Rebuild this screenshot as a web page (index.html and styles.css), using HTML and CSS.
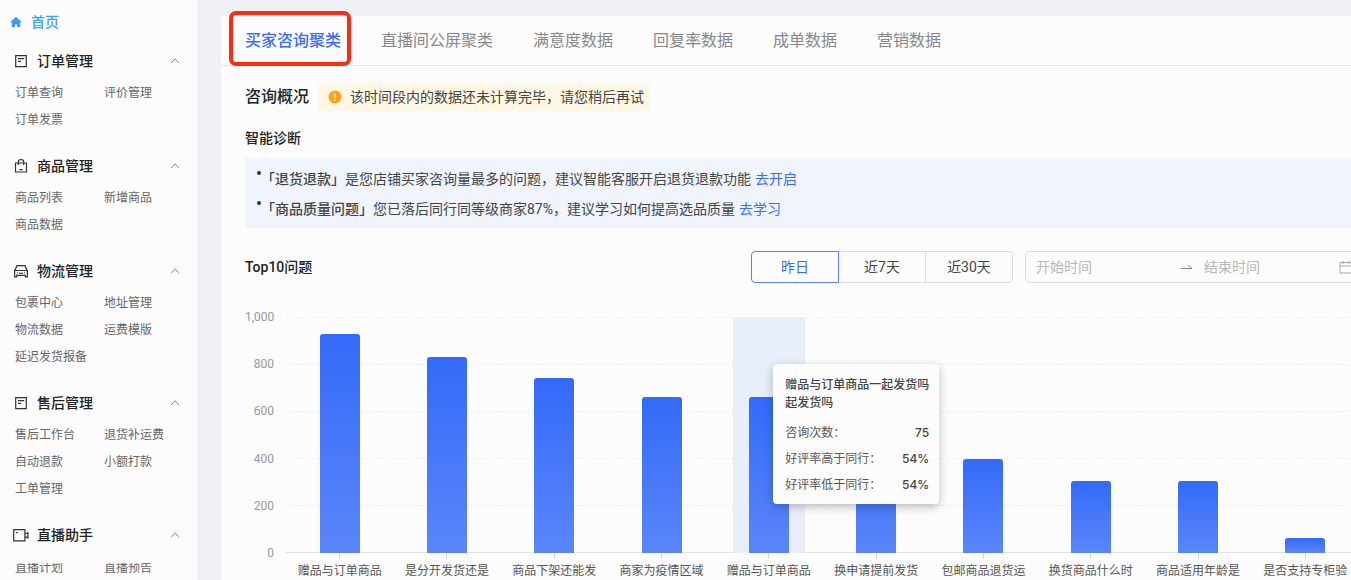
FILE: index.html
```html
<!DOCTYPE html>
<html lang="zh-CN">
<head>
<meta charset="utf-8">
<meta name="viewport" content="width=device-width, initial-scale=1">
<title>买家咨询聚类</title>
<link rel="stylesheet" href="styles.css">
</head>
<body>
<svg class="sprite" aria-hidden="true">
  <symbol id="i-note" viewBox="0 0 16 16"><path d="M2.7 2.6h10.6v11H2.7zM5 5.7h6.2M5 8.3h3.2"/></symbol>
  <symbol id="i-bag" viewBox="0 0 16 16"><path d="M2.5 5h11v9h-11zM5.3 7V4.2a2.7 2.7 0 0 1 5.4 0V7M6.3 11.6h3.4"/></symbol>
  <symbol id="i-car" viewBox="0 0 16 16"><path d="M1.6 8 4 2.7h8L14.4 8M1.6 7.5v6.3h2v-1.4h8.8v1.4h2V7.500zM4 9.800h.8M11.200 9.800h.8M6 9.800q2 1.400 4 0"/></symbol>
  <symbol id="i-video" viewBox="0 0 16 16"><path d="M.7 2.700h11.200v11.200H.7zM3 5.600h1.600M11.900 7l3-1.200v5l-3-1.200"/></symbol>
  <symbol id="i-up" viewBox="0 0 10 10"><path d="M1 7.200 5 2.800l4 4.400"/></symbol>
</svg>
<div class="layout">
  <nav class="sidebar" aria-label="主导航">
    <a class="home" href="#"><svg class="home-icon" viewBox="0 0 14 14" aria-hidden="true"><path d="M7 .8 13.800 7h-1.800v5.800H8.200V9.600H5.800v3.200H2V7H.2z"/></svg>首页</a>
    <section class="group">
      <button class="group-head" type="button" aria-expanded="true"><svg class="icon"><use href="#i-note"/></svg>订单管理<svg class="chevron"><use href="#i-up"/></svg></button>
      <div class="links"><a href="#">订单查询</a><a href="#">评价管理</a><a href="#">订单发票</a></div>
    </section>
    <section class="group">
      <button class="group-head" type="button" aria-expanded="true"><svg class="icon"><use href="#i-bag"/></svg>商品管理<svg class="chevron"><use href="#i-up"/></svg></button>
      <div class="links"><a href="#">商品列表</a><a href="#">新增商品</a><a href="#">商品数据</a></div>
    </section>
    <section class="group">
      <button class="group-head" type="button" aria-expanded="true"><svg class="icon"><use href="#i-car"/></svg>物流管理<svg class="chevron"><use href="#i-up"/></svg></button>
      <div class="links"><a href="#">包裹中心</a><a href="#">地址管理</a><a href="#">物流数据</a><a href="#">运费模版</a><a href="#">延迟发货报备</a></div>
    </section>
    <section class="group">
      <button class="group-head" type="button" aria-expanded="true"><svg class="icon"><use href="#i-note"/></svg>售后管理<svg class="chevron"><use href="#i-up"/></svg></button>
      <div class="links"><a href="#">售后工作台</a><a href="#">退货补运费</a><a href="#">自动退款</a><a href="#">小额打款</a><a href="#">工单管理</a></div>
    </section>
    <section class="group opening">
      <button class="group-head" type="button" aria-expanded="true"><svg class="icon"><use href="#i-video"/></svg>直播助手<svg class="chevron"><use href="#i-up"/></svg></button>
      <div class="links"><a href="#">直播计划</a><a href="#">直播预告</a></div>
    </section>
  </nav>

  <main class="main">
    <div class="panel">
      <div class="tabs" role="tablist">
        <button class="tab active" type="button" role="tab" aria-selected="true">买家咨询聚类</button>
        <button class="tab" type="button" role="tab">直播间公屏聚类</button>
        <button class="tab" type="button" role="tab">满意度数据</button>
        <button class="tab" type="button" role="tab">回复率数据</button>
        <button class="tab" type="button" role="tab">成单数据</button>
        <button class="tab" type="button" role="tab">营销数据</button>
      </div>
      <div class="content">
        <div class="overview">
          <h1>咨询概况</h1>
          <p class="notice"><svg class="warn" viewBox="0 0 14 14" aria-hidden="true"><circle cx="7" cy="7" r="6.500"/><path d="M7 3.500v4.300M7 9.500v1.200"/></svg>该时间段内的数据还未计算完毕，请您稍后再试</p>
        </div>
        <h2>智能诊断</h2>
        <ul class="diagnosis">
          <li><span><b>「退货退款」</b>是您店铺买家咨询量最多的问题，建议智能客服开启退货退款功能<a href="#">去开启</a></span></li>
          <li><span><b>「商品质量问题」</b>您已落后同行同等级商家87%，建议学习如何提高选品质量<a href="#">去学习</a></span></li>
        </ul>
        <div class="toolbar">
          <h2>Top10问题</h2>
          <div class="segments">
            <button class="segment selected" type="button">昨日</button>
            <button class="segment" type="button">近7天</button>
            <button class="segment" type="button">近30天</button>
          </div>
          <div class="range">
            <input class="start" type="text" aria-label="开始时间" placeholder="开始时间">
            <svg class="arrow" viewBox="0 0 12 12" aria-hidden="true"><path d="M0 7.500h11L7 4"/></svg>
            <input type="text" aria-label="结束时间" placeholder="结束时间">
            <svg class="calendar" viewBox="0 0 14 14" aria-hidden="true"><path d="M1 2.500h12V13H1zM1 6h12M4 .8v3.200M10 .8v3.200"/></svg>
          </div>
        </div>
        <div class="chart">
          <div class="axis"><span>1,000</span><span>800</span><span>600</span><span>400</span><span>200</span><span>0</span></div>
          <div class="plot">
            <div class="grid"><i></i><i></i><i></i><i></i><i></i></div>
            <div class="columns">
              <div class="column"><div class="track"><div class="bar" style="height:93%"></div></div><span>赠品与订单商品</span></div>
              <div class="column"><div class="track"><div class="bar" style="height:83%"></div></div><span>是分开发货还是</span></div>
              <div class="column"><div class="track"><div class="bar" style="height:74%"></div></div><span>商品下架还能发</span></div>
              <div class="column"><div class="track"><div class="bar" style="height:66%"></div></div><span>商家为疫情区域</span></div>
              <div class="column hovered"><div class="track"><div class="bar" style="height:66%"></div></div><span>赠品与订单商品</span>
                <div class="tooltip" role="tooltip">
                  <strong>赠品与订单商品一起发货吗<br>起发货吗</strong>
                  <dl>
                    <div><dt>咨询次数：</dt><dd>75</dd></div>
                    <div><dt>好评率高于同行：</dt><dd>54%</dd></div>
                    <div><dt>好评率低于同行：</dt><dd>54%</dd></div>
                  </dl>
                </div>
              </div>
              <div class="column"><div class="track"><div class="bar" style="height:50%"></div></div><span>换申请提前发货</span></div>
              <div class="column"><div class="track"><div class="bar" style="height:40%"></div></div><span>包邮商品退货运</span></div>
              <div class="column"><div class="track"><div class="bar" style="height:30.500%"></div></div><span>换货商品什么时</span></div>
              <div class="column"><div class="track"><div class="bar" style="height:30.500%"></div></div><span>商品适用年龄是</span></div>
              <div class="column"><div class="track"><div class="bar" style="height:6.300%"></div></div><span>是否支持专柜验</span></div>
            </div>
          </div>
        </div>
      </div>
    </div>
  </main>
</div>
</body>
</html>
```
FILE: styles.css
```css
* { box-sizing: border-box; }
body {
  margin: 0;
  background: #f0f1f7;
  color: #444;
  font: 14px/20px Roboto, "Noto Sans CJK SC", sans-serif;
}
h1, h2, p, ul, dl, dd { margin: 0; padding: 0; }
a { text-decoration: none; }
button, input { font: inherit; color: inherit; }
button { border: 0; padding: 0; background: none; cursor: pointer; }
.sprite { display: none; }

.layout { display: flex; height: 100vh; overflow: hidden; }

/* Sidebar */
.sidebar {
  flex: none;
  width: 197px;
  overflow: hidden;
  background: #fcfcfc;
}
.home {
  display: flex;
  align-items: center;
  gap: 9px;
  height: 47px;
  padding: 0 10px 3px;
  color: #3b9cff;
  font-weight: 500;
}
.home-icon { width: 12px; height: 12px; fill: #3b9cff; }
.group { margin-bottom: 18px; }
.group-head {
  display: flex;
  align-items: center;
  width: 100%;
  height: 28px;
  margin-bottom: 5px;
  padding: 0 17px 0 13px;
  color: #222;
  font-weight: 500;
}
.icon { width: 16px; height: 16px; margin-right: 8px; fill: none; stroke: #333; stroke-width: 1.2; }
.chevron { width: 10px; height: 10px; margin-left: auto; fill: none; stroke: #888; }
.links {
  display: grid;
  grid-template-columns: 89px 1fr;
  padding-left: 15px;
  font-size: 12px;
  line-height: 27px;
}
.links a { color: #666; white-space: nowrap; }
.opening .group-head { margin-bottom: 14px; }
.opening .links { height: 10px; overflow: hidden; line-height: 10px; }

/* Main panel */
.main { flex: 1; min-width: 0; padding: 16px 0 0 24px; overflow: hidden; }
.panel { min-height: 100%; margin-right: -37px; border-radius: 4px 0 0 0; background: #fcfcfc; }
.tabs {
  display: flex;
  gap: 40px;
  height: 50px;
  padding: 0 24px;
  border-bottom: 1px solid #e6e6e8;
}
.tab { position: relative; color: #888; font-size: 16px; white-space: nowrap; }
.tab.active { color: #3a6cf8; font-weight: 500; }
.tab.active::after {
  content: "";
  position: absolute;
  inset: -5px -10px -1px -16px;
  border: 4px solid #fb2c10;
  border-radius: 7px;
}
.content { padding: 17px 24px 0; }
.overview { display: flex; align-items: center; gap: 9px; }
h1 { color: #222; font-size: 16px; font-weight: 500; }
h2 { color: #222; font-size: 14px; font-weight: 500; line-height: 20px; }
.notice {
  display: flex;
  align-items: center;
  gap: 8px;
  height: 28px;
  padding: 0 6px 0 10px;
  border-radius: 3px;
  background: #fdf7e3;
}
.warn { width: 14px; height: 14px; fill: #fba414; stroke: #fff; stroke-width: 1.4; }
.warn circle { stroke: none; }
.overview + h2 { margin: 17px 0 10px; }
.diagnosis { padding: 6px 12px 4px; background: #eff4fd; list-style: none; }
.diagnosis li { display: flex; line-height: 30px; white-space: nowrap; }
.diagnosis li::before {
  content: "";
  width: 4px;
  height: 4px;
  margin-top: 7px;
  border-radius: 50%;
  background: #333;
}
.diagnosis b { font-weight: 500; }
.diagnosis a { margin-left: 4px; color: #3a6cf8; }

/* Filters */
.toolbar { display: flex; align-items: center; margin: 23px 0 34px; }
.segments { display: flex; margin-left: auto; }
.segment {
  width: 88px;
  height: 32px;
  margin-left: -1px;
  border: 1px solid #dcdcde;
}
.segment:first-child { border-radius: 4px 0 0 4px; }
.segment:last-child { border-radius: 0 4px 4px 0; }
.segment.selected { position: relative; border-color: #5480f9; color: #3a6cf8; }
.range {
  display: flex;
  align-items: center;
  width: 339px;
  height: 32px;
  margin-left: 12px;
  padding: 0 10px;
  border: 1px solid #dcdcde;
  border-radius: 4px;
}
.range input { flex: 1; min-width: 0; padding: 0; border: 0; outline: 0; background: none; }
.range .start { flex: 0 0 145px; }
.range input::placeholder { color: #b8b8b8; opacity: 1; }
.arrow { width: 12px; height: 12px; margin-right: 11px; fill: none; stroke: #888; }
.calendar { width: 14px; height: 14px; fill: none; stroke: #aaa; }

/* Chart */
.chart { display: flex; gap: 12px; padding-right: 5px; }
.axis {
  display: flex;
  flex-direction: column;
  justify-content: space-between;
  width: 29px;
  height: 256px;
  margin-top: -10px;
  color: #999;
  font-size: 12px;
  text-align: right;
}
.plot { position: relative; flex: 1; }
.grid {
  position: absolute;
  inset: 0 0 auto;
  display: grid;
  grid-template-rows: repeat(5, 1fr);
  height: 236px;
  border-bottom: 1px solid #e2e2e4;
}
.grid i { border-top: 1px dashed #ededef; }
.columns { position: relative; display: flex; }
.column { position: relative; flex: 1; min-width: 0; text-align: center; }
.track { display: flex; align-items: flex-end; justify-content: center; width: 72px; height: 236px; margin: 0 auto; }
.bar { width: 40px; border-radius: 3px 3px 0 0; background: linear-gradient(#336af8, #5b86fa); }
.column > span {
  display: block;
  color: #555;
  font-size: 12px;
  white-space: nowrap;
}
.column > span::before {
  content: "";
  display: block;
  width: 1px;
  height: 6px;
  margin: 0 auto 2px;
  background: #d8d8da;
}
.hovered .track { background: #e9eefb; }
.tooltip {
  position: absolute;
  z-index: 1;
  top: 47px;
  left: 58px;
  width: 166px;
  padding: 12px 10px 6px 12px;
  border-radius: 4px;
  background: #fcfcfc;
  box-shadow: 0 3px 10px rgba(0, 0, 0, .25);
  font-size: 12px;
  text-align: left;
}
.tooltip strong { display: block; margin-bottom: 8px; font-weight: 500; line-height: 18px; white-space: nowrap; }
.tooltip dl div { display: flex; justify-content: space-between; line-height: 26px; }
.tooltip dt { color: #555; }
.tooltip dd { font-family: Inter, sans-serif; font-weight: 500; }
```
